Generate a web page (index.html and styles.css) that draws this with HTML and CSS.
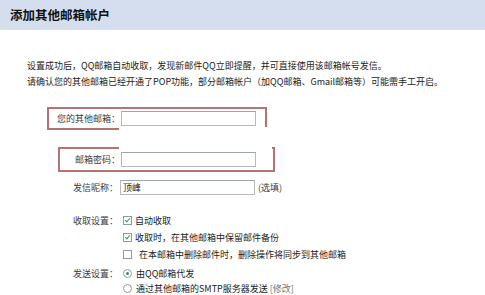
FILE: index.html
```
<!DOCTYPE html>
<html lang="zh-CN">
<head>
	<meta charset="utf-8">
	<title>添加其他邮箱帐户</title>
	<link rel="stylesheet" href="styles.css">
</head>
<body>
	<div class="title-bar">添加其他邮箱帐户</div>

	<div class="intro">
		<p>设置成功后，QQ邮箱自动收取，发现新邮件QQ立即提醒，并可直接使用该邮箱帐号发信。</p>
		<p>请确认您的其他邮箱已经开通了POP功能，部分邮箱帐户（加QQ邮箱、Gmail邮箱等）可能需手工开启。</p>
	</div>

	<div class="form">
		<div class="mark mark-one">
			<label class="label">您的其他邮箱：</label>
			<span class="field"></span>
		</div>

		<div class="mark mark-two">
			<label class="label">邮箱密码：</label>
			<span class="field"></span>
		</div>

		<div class="row row-nick">
			<label class="label">发信昵称：</label>
			<span class="field">顶峰</span>
			<span class="hint">(选填)</span>
		</div>

		<div class="group group-recv">
			<label class="label">收取设置：</label>
			<ul class="options">
				<li><span class="check on"></span>自动收取</li>
				<li><span class="check on"></span>收取时，在其他邮箱中保留邮件备份</li>
				<li class="wide"><span class="check"></span>在本邮箱中删除邮件时，删除操作将同步到其他邮箱</li>
			</ul>
		</div>

		<div class="group group-send">
			<label class="label">发送设置：</label>
			<ul class="options">
				<li><span class="radio on"></span>由QQ邮箱代发</li>
				<li><span class="radio"></span>通过其他邮箱的SMTP服务器发送 <a class="edit" href="#">[修改]</a></li>
			</ul>
		</div>
	</div>

	<!-- white patch over the marker boxes -->
	<div class="patch"></div>
</body>
</html>
```

FILE: styles.css
```
*{
	margin: 0;
	padding: 0;
}
ul{
	list-style: none
}
a{
	text-decoration: none
}

body{
	position: relative;
	width: 485px;
	height: 295px;
	overflow: hidden;
	background: #fff;
	font-family: "Noto Sans CJK SC", "Liberation Sans", sans-serif;
	font-size: 9px;
	color: #222;
	line-height: 1
}

.title-bar{
	height: 30px;
	line-height: 30px;
	padding-left: 10px;
	background: #d5deee;
	font-size: 12.5px;
	font-weight: bold;
	color: #111
}

.intro{
	margin-top: 28px;
	padding-left: 27px;
	line-height: 16px;
	color: #222
}

.form{
	margin-top: 17px
}

.label{
	color: #3a3a3a;
	text-align: right
}

.field{
	display: block;
	width: 135px;
	height: 15px;
	box-sizing: border-box;
	border: 1px solid #b5bac2;
	border-top-color: #9ea4ad;
	background: #fff;
	padding-left: 2px;
	line-height: 13px;
	color: #222
}

/* red marker boxes */
.mark{
	display: flex;
	align-items: center;
	border: 2px solid #b27373;
	box-sizing: border-box
}
.mark-one{
	margin-left: 47px;
	width: 220px;
	height: 23px
}
.mark-one .label{
	width: 71px
}
.mark-two{
	margin-top: 17px;
	margin-left: 58px;
	width: 217px;
	height: 25px
}
.mark-two .label{
	width: 60px
}
.mark .field{
	margin-left: 1px
}

.row{
	display: flex;
	align-items: center
}
.row .label,
.group .label{
	width: 118px
}
.row .field{
	margin-left: 2px
}
.row-nick{
	margin-top: 8px
}
.hint{
	margin-left: 3px;
	color: #3a3a3a
}

.group{
	display: flex;
	align-items: flex-start
}
.group .label{
	line-height: 17px
}
.group-recv{
	margin-top: 17px
}
.group-send{
	margin-top: 3px
}
.group-send .label{
	line-height: 15px
}
.options{
	margin-left: 5px
}
.options li{
	display: flex;
	align-items: center;
	height: 17px;
	color: #222
}
.group-send .options li{
	height: 15px
}

.check{
	width: 9px;
	height: 9px;
	box-sizing: border-box;
	border: 1px solid #8f9aa6;
	background: #fff;
	margin-right: 3px;
	position: relative
}
.check.on::after{
	content: "";
	position: absolute;
	left: 2px;
	top: 0px;
	width: 2px;
	height: 4px;
	border: solid #3aa03a;
	border-width: 0 1.5px 1.5px 0;
	transform: rotate(40deg)
}
.wide .check{
	margin-right: 7px
}

.radio{
	width: 9px;
	height: 9px;
	box-sizing: border-box;
	border: 1px solid #8f9aa6;
	border-radius: 50%;
	background: #fff;
	margin-right: 4px;
	position: relative
}
.radio.on::after{
	content: "";
	position: absolute;
	left: 2px;
	top: 2px;
	width: 3px;
	height: 3px;
	border-radius: 50%;
	background: #3f8f3f
}

.edit{
	margin-left: 2px;
	color: #777
}

.patch{
	position: absolute;
	z-index: 5;
	left: 119px;
	top: 127px;
	width: 153px;
	height: 22px;
	background: #fff
}
```
